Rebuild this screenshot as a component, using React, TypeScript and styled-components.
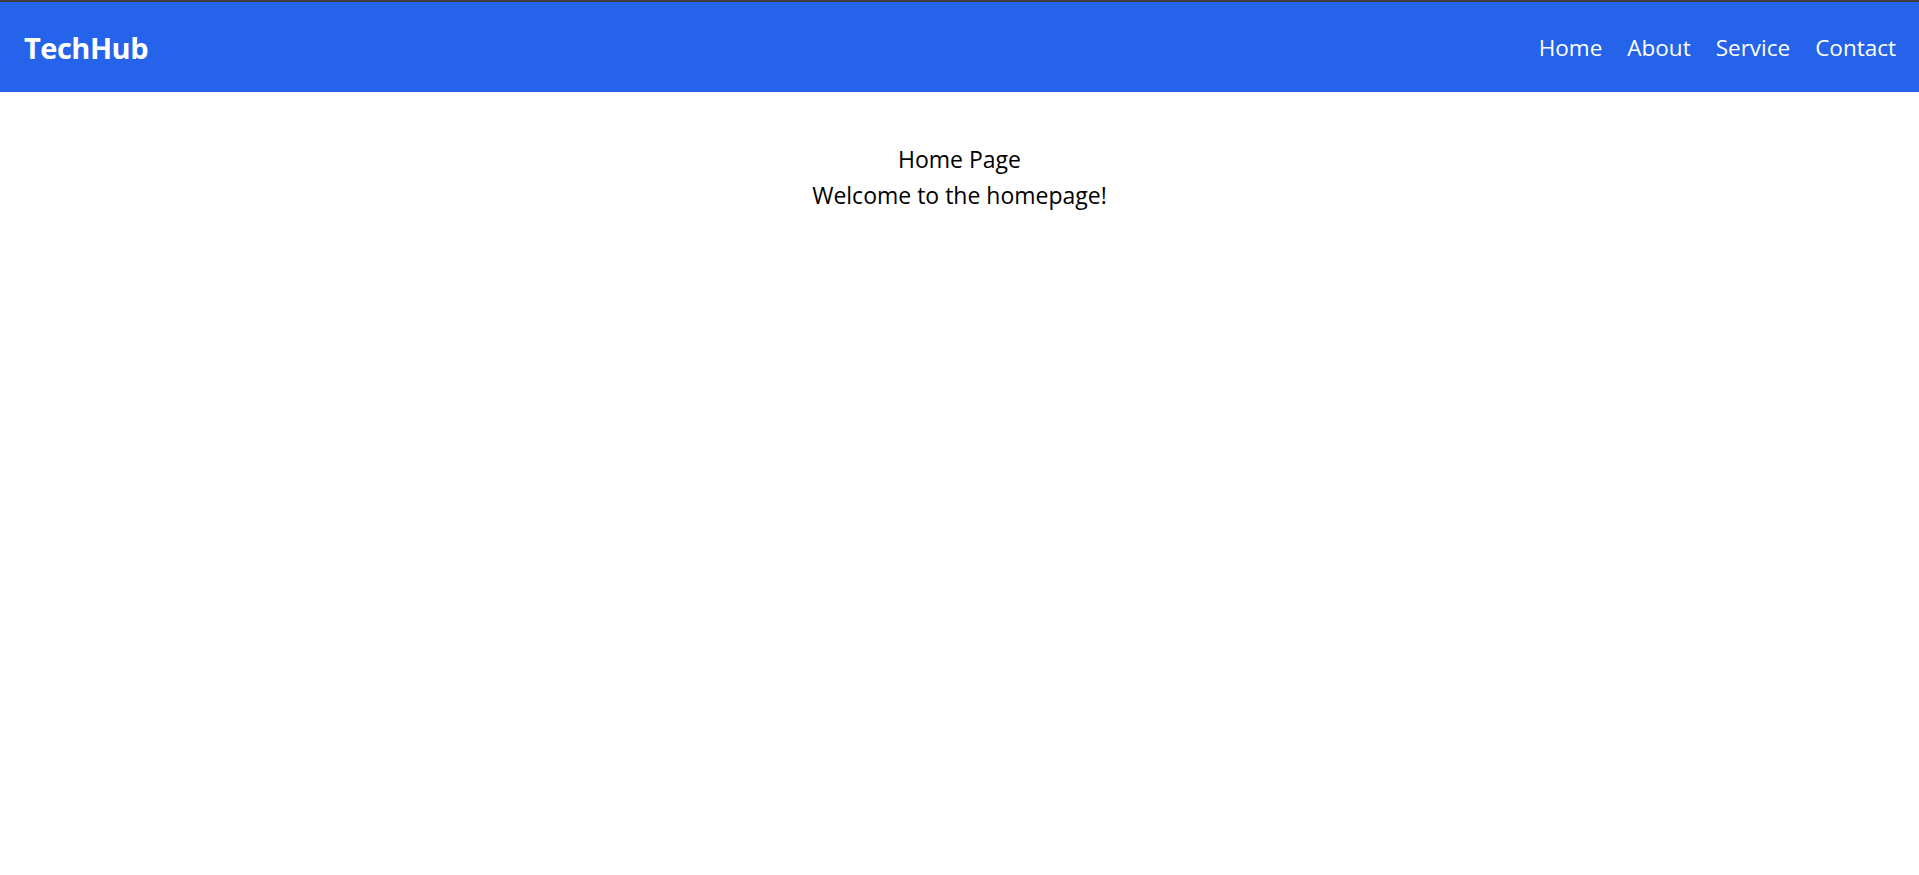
import React from 'react'
import styled, { createGlobalStyle } from 'styled-components'

const GlobalStyle = createGlobalStyle`
    * { box-sizing: border-box; }
    body {
        margin: 0;
        background: #ffffff;
        font-family: "Open Sans", "Noto Sans", sans-serif;
        color: #000000;
    }
`

const Page = styled.div`
    min-height: 100vh;
    border-top: 2px solid #3c3c3c;
`

const NavBar = styled.nav`
    height: 90px;
    background: #2563eb;
    display: flex;
    align-items: center;
    justify-content: space-between;
    padding: 0 23px 0 24px;
`

const Brand = styled.div`
    color: #ffffff;
    font-weight: 700;
    font-size: 29px;
    letter-spacing: -0.5px;
`

const Links = styled.ul`
    display: flex;
    gap: 25px;
    list-style: none;
    margin: 0;
    padding: 0;
`

const NavLink = styled.a`
    color: #ffffff;
    font-size: 22.5px;
    text-decoration: none;
    cursor: pointer;
`

const Main = styled.main`
    display: flex;
    flex-direction: column;
    align-items: center;
    padding-top: 49px;
    font-size: 23px;
    line-height: 36px;
`

const Title = styled.div``

const Lead = styled.p`
    margin: 0;
`

const App: React.FC = () => {
    const links = ['Home', 'About', 'Service', 'Contact']
    return (
        <Page>
            <GlobalStyle />
            <NavBar>
                <Brand>TechHub</Brand>
                <Links>
                    { links.map(l => <li key={l}><NavLink>{ l }</NavLink></li>) }
                </Links>
            </NavBar>
            <Main>
                <Title>Home Page</Title>
                <Lead>Welcome to the homepage!</Lead>
            </Main>
        </Page>
    )
}

export default App
